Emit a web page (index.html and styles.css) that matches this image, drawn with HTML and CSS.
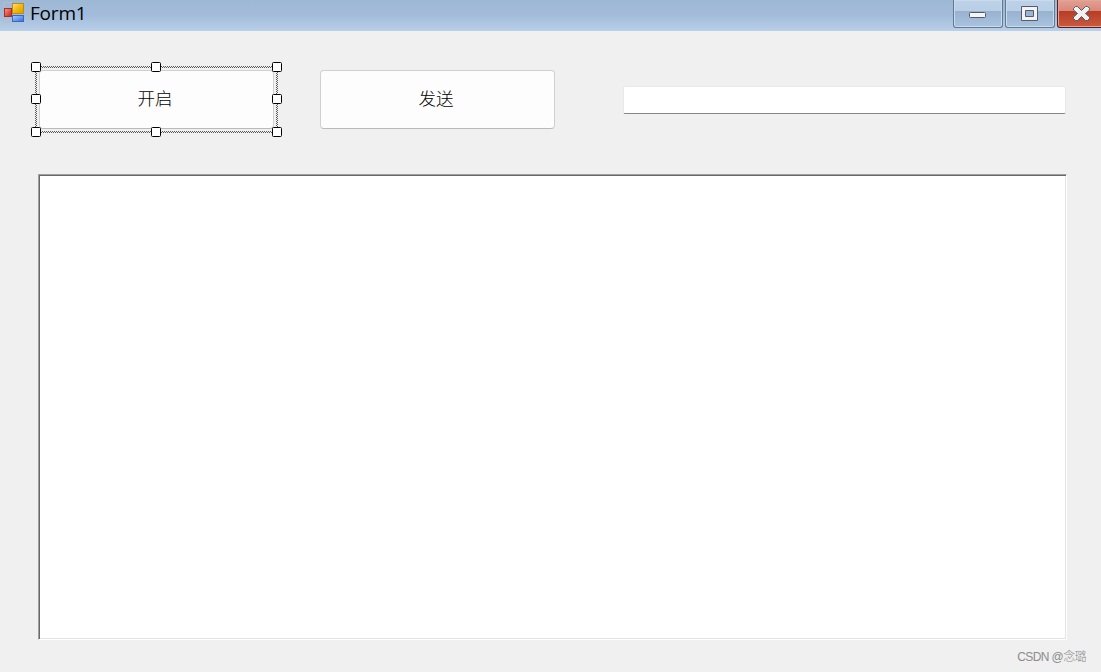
FILE: index.html
```html
<!DOCTYPE html>
<html lang="zh-CN">
<head>
    <meta charset="UTF-8">
    <meta name="viewport" content="width=device-width, initial-scale=1.0">
    <title>Form1</title>
    <link rel="stylesheet" href="styles.css">
</head>
<body>
    <header class="titlebar">
        <svg class="app-icon" width="22" height="22" viewBox="0 0 22 22">
            <defs>
                <linearGradient id="yellow" x1="0" y1="0" x2="1" y2="1">
                    <stop offset="0" stop-color="#ffe27a"/>
                    <stop offset="0.5" stop-color="#f0b90c"/>
                    <stop offset="1" stop-color="#d99a00"/>
                </linearGradient>
                <linearGradient id="red" x1="0" y1="0" x2="1" y2="1">
                    <stop offset="0" stop-color="#ff9a80"/>
                    <stop offset="1" stop-color="#c0201c"/>
                </linearGradient>
                <linearGradient id="blue" x1="0" y1="0" x2="1" y2="1">
                    <stop offset="0" stop-color="#a9ccff"/>
                    <stop offset="1" stop-color="#2f6ee0"/>
                </linearGradient>
            </defs>
            <path d="M0.5 5V0.5H9M0.5 15V20.5H9" fill="none" stroke="#b9bcc2"/>
            <rect x="9.5" y="1.5" width="11" height="10" fill="url(#yellow)" stroke="#b98a1c"/>
            <rect x="1.5" y="6.5" width="7" height="8" fill="url(#red)" stroke="#a82c2c"/>
            <rect x="9.5" y="13.5" width="11" height="6" fill="url(#blue)" stroke="#3f66b8"/>
        </svg>
        <h1 class="title">Form1</h1>
        <div class="controls">
            <div class="control">
                <svg width="48" height="27" viewBox="0 0 48 27">
                    <rect x="15.5" y="12.5" width="16" height="5" rx="1" fill="#f5f5f5" stroke="#535b6c"/>
                </svg>
            </div>
            <div class="control">
                <svg width="48" height="27" viewBox="0 0 48 27">
                    <path d="M15.5 6.5H31.5V20.5H15.5ZM19.5 10.5V16.5H27.5V10.5Z" fill="#f3f3f3" fill-rule="evenodd" stroke="#535b6c" stroke-linejoin="round"/>
                </svg>
            </div>
            <div class="control close">
                <svg width="48" height="27" viewBox="0 0 48 27">
                    <path d="M15.5 8.5L17.5 6.5H19.5L23.5 10.5L27.5 6.5H29.5L31.5 8.5V10L27.5 13.5L31.5 17V18.5L29.5 20.5H27.5L23.5 16.5L19.5 20.5H17.5L15.5 18.5V17L19.5 13.5L15.5 10Z" fill="#f1f1f1" stroke="#535b6c"/>
                </svg>
            </div>
        </div>
    </header>

    <main class="form">
        <div class="row">
            <div class="selected">
                <button class="btn">开启</button>
                <!-- designer selection frame -->
                <svg class="selection" width="252" height="76" viewBox="0 0 252 76">
                    <defs>
                        <pattern id="checker" width="2" height="2" patternUnits="userSpaceOnUse">
                            <rect width="2" height="2" fill="#f0f0f0"/>
                            <rect width="1" height="1" fill="#5a5a5a"/>
                            <rect x="1" y="1" width="1" height="1" fill="#5a5a5a"/>
                        </pattern>
                    </defs>
                    <path d="M4 4H247V71H4ZM6 6V69H245V6Z" fill="url(#checker)" fill-rule="evenodd"/>
                    <g class="handles">
                        <rect x="0.5" y="0.5" width="9" height="9" rx="1"/>
                        <rect x="120.5" y="0.5" width="9" height="9" rx="1"/>
                        <rect x="241.5" y="0.5" width="9" height="9" rx="1"/>
                        <rect x="0.5" y="32.5" width="9" height="9" rx="1"/>
                        <rect x="241.5" y="32.5" width="9" height="9" rx="1"/>
                        <rect x="0.5" y="65.5" width="9" height="9" rx="1"/>
                        <rect x="120.5" y="65.5" width="9" height="9" rx="1"/>
                        <rect x="241.5" y="65.5" width="9" height="9" rx="1"/>
                    </g>
                </svg>
            </div>
            <button class="btn">发送</button>
            <input class="textbox" type="text">
        </div>
        <div class="list"></div>
        <footer class="watermark">CSDN @念璐</footer>
    </main>
</body>
</html>
```
FILE: styles.css
```css
* {
    padding: 0;
    margin: 0;
    box-sizing: border-box;
}
body {
    height: 672px;
    overflow: hidden;
    background-color: #f0f0f0;
    font-family: "Open Sans", "Noto Sans CJK SC", sans-serif;
}
.titlebar {
    display: flex;
    align-items: flex-start;
    height: 31px;
    padding-left: 3px;
    overflow: hidden;
    background: linear-gradient(#9db8d5, #a3bcd9 50%, #b8d0ea);
}
.app-icon {
    margin-top: 2px;
    flex: none;
}
.title {
    margin-left: 5px;
    font-family: "Open Sans", sans-serif;
    font-size: 19px;
    font-weight: 400;
    line-height: 27px;
    letter-spacing: -0.2px;
    color: #000;
}
.controls {
    display: flex;
    gap: 2px;
    margin-left: auto;
    margin-right: -2px;
}
.control {
    width: 50px;
    height: 28px;
    border: 1px solid #64788f;
    border-top: none;
    border-radius: 0 0 3px 3px;
    background: linear-gradient(#bdd2e8 0, #b9cfe5 11px, #98b1cf 11px, #a9c3df 100%);
    box-shadow: inset 0 0 0 1px #c9dcee;
}
.control svg {
    display: block;
}
.close {
    width: 46px;
    border-color: #5c1c20;
    background: linear-gradient(#e2a094 0, #d98878 11px, #b83c25 11px, #c95a3e 100%);
    box-shadow: inset 0 0 0 1px #e3a498;
}
.form {
    padding: 39px 34px 0 38px;
}
.row {
    display: flex;
    align-items: flex-start;
    height: 104px;
}
.selected {
    position: relative;
    margin-left: 1px;
    margin-right: 46px;
}
.selection {
    position: absolute;
    top: -8px;
    left: -8px;
}
.handles rect {
    fill: #fff;
    stroke: #000;
}
.btn {
    display: block;
    width: 235px;
    height: 59px;
    padding: 0 3px 4px 0;
    border: 1px solid #d0d0d0;
    border-bottom-color: #bababa;
    border-radius: 4px;
    background-color: #fdfdfd;
    font-family: "Noto Sans CJK SC", sans-serif;
    font-size: 17.5px;
    font-weight: 300;
    color: #000;
}
.textbox {
    width: 443px;
    flex: none;
    height: 28px;
    margin: 16px 0 0 68px;
    border: 1px solid #e8e8e8;
    border-bottom: 1px solid #868686;
    border-radius: 2px;
    background-color: #fff;
}
.list {
    width: 1029px;
    height: 466px;
    padding: 1px;
    border: 1px solid;
    border-color: #a0a0a0 #fff #fff #a0a0a0;
    background-color: #fff;
    box-shadow: inset 1px 1px #696969, inset -1px -1px #e3e3e3;
}
.watermark {
    margin-top: 8px;
    padding-right: 15px;
    margin-right: -34px;
    text-align: right;
    font-family: "Liberation Sans", "Noto Sans CJK SC", sans-serif;
    font-size: 12px;
    font-weight: 300;
    line-height: 18px;
    letter-spacing: -0.6px;
    color: #8c8c8c;
}
```
